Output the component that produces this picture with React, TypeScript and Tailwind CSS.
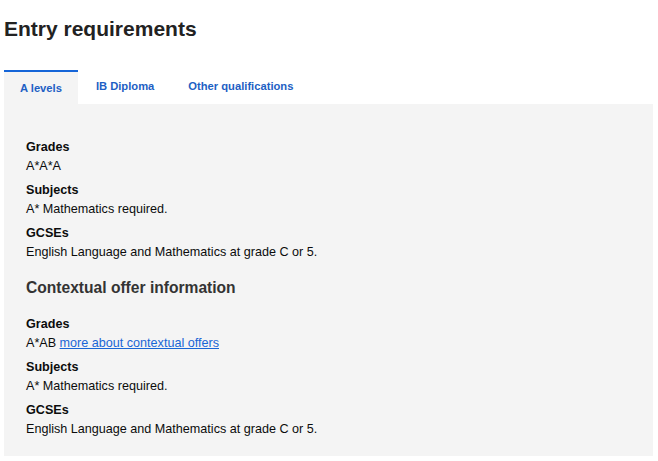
const tabs = ['A levels', 'IB Diploma', 'Other qualifications']

type Item = { label: string; value: string; link?: string }

const standard: Item[] = [
  { label: 'Grades', value: 'A*A*A' },
  { label: 'Subjects', value: 'A* Mathematics required.' },
  { label: 'GCSEs', value: 'English Language and Mathematics at grade C or 5.' },
]

const contextual: Item[] = [
  { label: 'Grades', value: 'A*AB', link: 'more about contextual offers' },
  { label: 'Subjects', value: 'A* Mathematics required.' },
  { label: 'GCSEs', value: 'English Language and Mathematics at grade C or 5.' },
]

function Requirements({ items }: { items: Item[] }) {
  return (
    <dl className="flex flex-col gap-[5px]">
      {items.map((it) => (
        <div key={it.label}>
          <dt className="font-bold leading-[19px] text-[#0b0c0c]">{it.label}</dt>
          <dd className="leading-[19px] text-[#0b0c0c]">
            {it.value}
            {it.link && (
              <>
                {' '}
                <a href="#" className="text-[#1a66d6] underline">
                  {it.link}
                </a>
              </>
            )}
          </dd>
        </div>
      ))}
    </dl>
  )
}

export default function App() {
  return (
    <div
      className="min-h-[461px] bg-white pl-[4px] pr-[5px] pt-[15px]"
      style={{ fontFamily: '"Liberation Sans", Arial, sans-serif' }}
    >
      <h2 className="text-[21px] font-bold leading-[28px] text-[#222]">Entry requirements</h2>

      <div className="mt-[27px] flex gap-[2px]">
        {tabs.map((t, i) =>
          i === 0 ? (
            <div
              key={t}
              className="h-[34px] border-t-2 border-[#1565d8] bg-[#f4f4f4] px-[16px] pt-[9px] text-[11.2px] font-bold leading-[14px] text-[#1d5fc4]"
            >
              {t}
            </div>
          ) : (
            <div
              key={t}
              className="h-[34px] px-[16px] pt-[9px] text-[11.2px] font-bold leading-[14px] text-[#1d5fc4]"
            >
              {t}
            </div>
          )
        )}
      </div>

      <div className="bg-[#f4f4f4] px-[22px] pb-[17px] pt-[34px] text-[12.6px]">
        <Requirements items={standard} />
        <h3 className="mt-[15px] text-[15.6px] font-bold leading-[22px] text-[#333]">
          Contextual offer information
        </h3>
        <div className="mt-[16px]">
          <Requirements items={contextual} />
        </div>
      </div>
    </div>
  )
}
